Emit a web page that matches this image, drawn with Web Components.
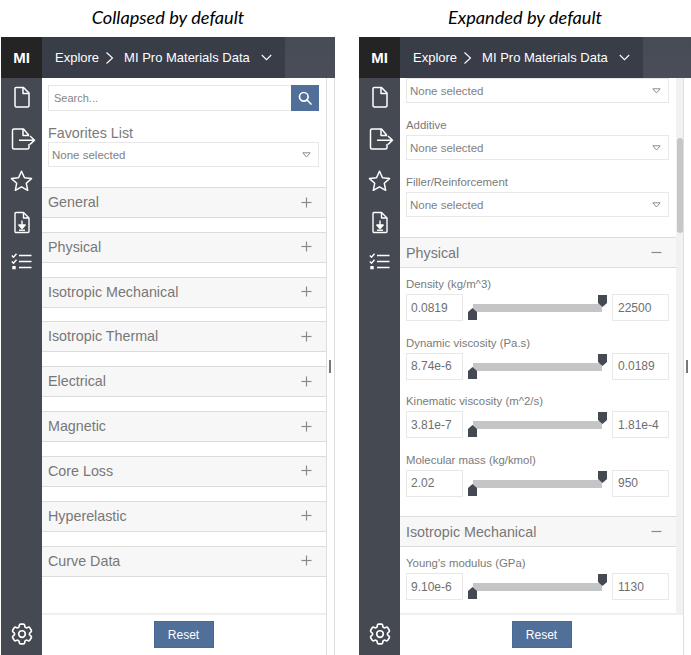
<!DOCTYPE html>
<html lang="en">
<head>
<meta charset="utf-8">
<title>MI Explore panels</title>
<style>
    html, body { margin: 0; background: #fff; }
    body { width: 691px; height: 655px; overflow: hidden; font-family: "Liberation Sans", Arial, sans-serif; }
    .page {
        display: grid;
        grid-template-columns: 334px 332px;
        grid-template-rows: 37px 618px;
        column-gap: 24px;
        padding-left: 1px;
    }
</style>
</head>
<body>
<div class="page">
    <mi-caption>Collapsed by default</mi-caption>
    <mi-caption>Expanded by default</mi-caption>

    <mi-panel>
        <mi-search></mi-search>
        <mi-select label="Favorites List" big></mi-select>
        <div style="height:20px"></div>
        <mi-section title="General"></mi-section>
        <mi-section title="Physical"></mi-section>
        <mi-section title="Isotropic Mechanical"></mi-section>
        <mi-section title="Isotropic Thermal"></mi-section>
        <mi-section title="Electrical"></mi-section>
        <mi-section title="Magnetic"></mi-section>
        <mi-section title="Core Loss"></mi-section>
        <mi-section title="Hyperelastic"></mi-section>
        <mi-section title="Curve Data"></mi-section>
    </mi-panel>

    <mi-panel scrollbar>
        <mi-select></mi-select>
        <mi-select label="Additive"></mi-select>
        <mi-select label="Filler/Reinforcement"></mi-select>
        <div style="height:20px"></div>
        <mi-section title="Physical" open>
            <mi-range label="Density (kg/m^3)" min="0.0819" max="22500"></mi-range>
            <mi-range label="Dynamic viscosity (Pa.s)" min="8.74e-6" max="0.0189"></mi-range>
            <mi-range label="Kinematic viscosity (m^2/s)" min="3.81e-7" max="1.81e-4"></mi-range>
            <mi-range label="Molecular mass (kg/kmol)" min="2.02" max="950"></mi-range>
        </mi-section>
        <mi-section title="Isotropic Mechanical" open>
            <mi-range label="Young's modulus (GPa)" min="9.10e-6" max="1130"></mi-range>
        </mi-section>
    </mi-panel>
</div>

<script>
class MiCaption extends HTMLElement {
    connectedCallback() {
        this.attachShadow({ mode: 'open' });
        this.shadowRoot.innerHTML = `
            <style>
                :host {
                    display: block;
                    text-align: center;
                    font: italic 18.200px/34px Lato, sans-serif;
                    color: #000;
                }
            </style>
            <slot></slot>
        `;
    }
}

class MiPanel extends HTMLElement {
    connectedCallback() {
        this.attachShadow({ mode: 'open' });
        const scrollbar = this.hasAttribute('scrollbar');
        this.shadowRoot.innerHTML = `
            <style>
                :host {
                    display: flex;
                    flex-direction: column;
                    font-family: "Liberation Sans", Arial, sans-serif;
                    overflow: hidden;
                }
                header {
                    display: flex;
                    flex: 0 0 41px;
                    background: linear-gradient(#474b55, #4a4e58);
                    color: #fff;
                }
                .brand {
                    flex: 0 0 41px;
                    display: flex;
                    align-items: center;
                    justify-content: center;
                    background: #242424;
                    font-weight: bold;
                    font-size: 15px;
                }
                .crumbs {
                    flex: 0 0 243px;
                    display: flex;
                    align-items: center;
                    box-sizing: border-box;
                    padding-left: 13px;
                    background: #383d47;
                    font-size: 13px;
                    white-space: nowrap;
                }
                .crumbs svg { display: block; }
                .sep { margin: 0 10px 0 6px; }
                .caret { margin-left: 11px; }
                .body { flex: 1; display: flex; min-height: 0; }
                nav {
                    flex: 0 0 41px;
                    display: flex;
                    flex-direction: column;
                    align-items: center;
                    gap: 19px;
                    background: #444952;
                    padding-top: 8px;
                }
                nav svg { display: block; }
                nav .gear { margin: auto 0 10px; }
                main {
                    flex: 0 0 ${scrollbar ? 284 : 285}px;
                    display: flex;
                    flex-direction: column;
                    box-sizing: border-box;
                    border-right: 1px solid #dedede;
                    min-height: 0;
                }
                .view { flex: 1; display: flex; min-height: 0; }
                .scroll { flex: 1; min-width: 0; overflow: hidden; }
                .track { flex: 0 0 7px; background: #f1f1f1; }
                .thumb { width: 6px; height: 95px; margin: 60px 0 0 1px; border-radius: 3px; background: #c6c6c6; }
                footer {
                    flex: 0 0 42px;
                    display: flex;
                    justify-content: center;
                    padding-top: 6px;
                    box-sizing: border-box;
                    border-top: 2px solid #f0f0f0;
                }
                button {
                    width: 60px;
                    height: 27px;
                    margin-left: ${scrollbar ? 0 : -1}px;
                    border: 1px solid #4a6a96;
                    background: #517099;
                    color: #fff;
                    font: 12px "Liberation Sans", Arial, sans-serif;
                    padding: 0;
                }
                .gutter {
                    flex: 1;
                    display: flex;
                    align-items: center;
                    justify-content: center;
                    box-sizing: border-box;
                    ${scrollbar ? '' : 'border-right: 1px solid #dedede;'}
                }
                .gutter i { display: block; width: 2px; height: 13px; background: #777; margin-left: ${scrollbar ? -1 : -1}px; }
            </style>
            <header>
                <div class="brand">MI</div>
                <div class="crumbs">
                    <span>Explore</span>
                    <svg class="sep" width="9" height="14" viewBox="0 0 9 14" fill="none" stroke="#fff" stroke-width="1.1"><path d="M1.5 1.5 7.5 7l-6 5.500"/></svg>
                    <span>MI Pro Materials Data</span>
                    <svg class="caret" width="11" height="7" viewBox="0 0 11 7" fill="none" stroke="#fff" stroke-width="1.1"><path d="M.8 1 5.500 5.700 10.200 1"/></svg>
                </div>
            </header>
            <div class="body">
                <nav>
                    <svg width="20" height="22" viewBox="0 0 20 22" fill="none" stroke="#fff" stroke-width="1.500" stroke-linejoin="round"><path d="M4 1.500h7.500L17 7V19.500a1.500 1.500 0 0 1-1.500 1.500h-11A1.500 1.500 0 0 1 3 19.500V2.500a1 1 0 0 1 1-1z"/><path d="M11 1.500v6h6"/></svg>
                    <svg width="26" height="24" viewBox="0 0 26 24" fill="none" stroke="#fff" stroke-width="1.500" stroke-linejoin="round" style="margin-left:3px"><path d="M19 8.500 13.500 2H4a1.500 1.500 0 0 0-1.500 1.500v17A1.500 1.500 0 0 0 4 22h13.500a1.500 1.500 0 0 0 1.500-1.500V17"/><path d="M13 2v6.500h6"/><path d="M9 13.200h15M20 9l4.500 4.200-4.500 4.200"/></svg>
                    <svg width="23" height="22" viewBox="0 0 23 22" fill="none" stroke="#fff" stroke-width="1.500" stroke-linejoin="round"><path d="M11.500 1.200 14.500 7.800l7 .8-5.200 4.700 1.400 7-6.200-3.500-6.200 3.500 1.400-7-5.200-4.700 7-.8z"/></svg>
                    <svg width="18" height="23" viewBox="0 0 18 23" fill="none" stroke="#fff" stroke-width="1.400" stroke-linejoin="round"><path d="M3 1.500h7.500L16 7v13.500a1 1 0 0 1-1 1H3a1 1 0 0 1-1-1v-18a1 1 0 0 1 1-1z"/><path d="M10.500 1.500V7H16"/><path d="M9 9.500v7"/><path d="M5.800 14h6.400L9 17.500z" fill="#fff"/><path d="M6 19.200h6"/></svg>
                    <svg width="21" height="17" viewBox="0 0 21 17" fill="none" stroke="#fff" stroke-width="1.400"><path d="M8 2.500h12.500M8 8.500h12.500M8 14.500h12.500"/><path d="M.8 2.500l1.700 1.700L5.500.8M.8 8.500l1.700 1.700 3-3.400"/><path d="M2 13.800h2v1.700H2z" fill="#fff"/></svg>
                    <svg class="gear" width="22" height="22" viewBox="2 2 20 20" fill="none" stroke="#fff" stroke-width="1.500" stroke-linejoin="round"><circle cx="12" cy="12" r="3"/><path d="M9.594 3.940c.09-.542.56-.94 1.110-.94h2.593c.55 0 1.020.398 1.110.94l.213 1.281c.063.374.313.686.645.870.074.040.147.083.220.127.325.196.720.257 1.075.124l1.217-.456a1.125 1.125 0 0 1 1.370.490l1.296 2.247a1.125 1.125 0 0 1-.260 1.431l-1.003.827c-.293.241-.438.613-.430.992a7.723 7.723 0 0 1 0 .255c-.008.378.137.750.430.991l1.004.827c.424.350.534.955.260 1.430l-1.298 2.247a1.125 1.125 0 0 1-1.369.491l-1.217-.456c-.355-.133-.750-.072-1.076.124a6.470 6.470 0 0 1-.220.128c-.331.183-.581.495-.644.869l-.213 1.281c-.09.543-.56.940-1.110.940h-2.594c-.55 0-1.019-.398-1.110-.940l-.213-1.281c-.062-.374-.312-.686-.644-.870a6.520 6.520 0 0 1-.220-.127c-.325-.196-.720-.257-1.076-.124l-1.217.456a1.125 1.125 0 0 1-1.369-.490l-1.297-2.247a1.125 1.125 0 0 1 .260-1.431l1.004-.827c.292-.240.437-.613.430-.991a6.932 6.932 0 0 1 0-.255c.007-.380-.138-.751-.430-.992l-1.004-.827a1.125 1.125 0 0 1-.260-1.430l1.297-2.247a1.125 1.125 0 0 1 1.370-.491l1.216.456c.356.133.751.072 1.076-.124.072-.044.146-.086.220-.128.332-.183.582-.495.644-.869l.214-1.280z"/></svg>
                </nav>
                <main>
                    <div class="view">
                        <div class="scroll"><slot></slot></div>
                        ${scrollbar ? '<div class="track"><div class="thumb"></div></div>' : ''}
                    </div>
                    <footer><button>Reset</button></footer>
                </main>
                <div class="gutter"><i></i></div>
            </div>
        `;
    }
}

class MiSearch extends HTMLElement {
    connectedCallback() {
        this.attachShadow({ mode: 'open' });
        this.shadowRoot.innerHTML = `
            <style>
                :host {
                    display: flex;
                    margin: 7px 7px 0 6px;
                    height: 26px;
                    font-family: "Liberation Sans", Arial, sans-serif;
                }
                .input {
                    flex: 1;
                    display: flex;
                    align-items: center;
                    box-sizing: border-box;
                    border: 1px solid #e6e6e6;
                    border-right: 0;
                    padding-left: 5px;
                    font-size: 11px;
                    color: #858585;
                }
                .btn {
                    flex: 0 0 28px;
                    display: flex;
                    align-items: center;
                    justify-content: center;
                    background: #517099;
                }
            </style>
            <div class="input">Search...</div>
            <div class="btn">
                <svg width="14" height="14" viewBox="0 0 14 14" fill="none" stroke="#fff" stroke-width="1.700"><circle cx="5.800" cy="5.800" r="4.300"/><path d="m9 9 4 4" stroke-linecap="round"/></svg>
            </div>
        `;
    }
}

class MiSelect extends HTMLElement {
    connectedCallback() {
        this.attachShadow({ mode: 'open' });
        const label = this.getAttribute('label');
        const big = this.hasAttribute('big');
        this.shadowRoot.innerHTML = `
            <style>
                :host {
                    display: block;
                    margin: 0 7px 0 6px;
                    font-family: "Liberation Sans", Arial, sans-serif;
                }
                .label {
                    color: #7a7a7a;
                    font-size: ${big ? 14.300 : 11.400}px;
                    line-height: ${big ? 16 : 14}px;
                    padding-top: ${big ? 14 : 15}px;
                    padding-bottom: ${big ? 1 : 3}px;
                }
                .box {
                    display: flex;
                    align-items: center;
                    justify-content: space-between;
                    height: 25px;
                    box-sizing: border-box;
                    border: 1px solid #e8e8e8;
                    padding: 0 7px 0 3px;
                    font-size: 11.500px;
                    color: #7f7f7f;
                }
                svg { display: block; margin-top: 1px; }
            </style>
            ${label ? `<div class="label">${label}</div>` : ''}
            <div class="box">
                <span>None selected</span>
                <svg width="9" height="6" viewBox="0 0 9 6" fill="none" stroke="#8c8c8c"><path d="M.8.800h7.400L4.500 5z"/></svg>
            </div>
        `;
    }
}

class MiSection extends HTMLElement {
    connectedCallback() {
        this.attachShadow({ mode: 'open' });
        const open = this.hasAttribute('open');
        const title = this.getAttribute('title');
        this.shadowRoot.innerHTML = `
            <style>
                :host {
                    display: block;
                    font-family: "Liberation Sans", Arial, sans-serif;
                    margin-bottom: ${open ? 0 : 13.830}px;
                }
                .head {
                    display: flex;
                    align-items: center;
                    justify-content: space-between;
                    height: 31px;
                    box-sizing: border-box;
                    border-top: 1px solid #dcdcdc;
                    border-bottom: 1px solid #dcdcdc;
                    background: #f7f7f7;
                    padding: 0 14px ${open ? 0 : 1}px 6px;
                    font-size: 14.300px;
                    color: #777;
                }
                svg { display: block; }
                .items { padding-bottom: ${open ? 14 : 0}px; }
            </style>
            <div class="head">
                <span>${title}</span>
                <svg width="11" height="11" viewBox="0 0 11 11" stroke="#8a8a8a" stroke-width="1.200"><path d="M.5 5.500h10"/>${open ? '' : '<path d="M5.500.5v10"/>'}</svg>
            </div>
            ${open ? '<div class="items"><slot></slot></div>' : ''}
        `;
    }
}

class MiRange extends HTMLElement {
    connectedCallback() {
        this.attachShadow({ mode: 'open' });
        const label = this.getAttribute('label');
        const min = this.getAttribute('min');
        const max = this.getAttribute('max');
        this.shadowRoot.innerHTML = `
            <style>
                :host {
                    display: block;
                    height: 58.600px;
                    margin: 0 7px 0 6px;
                    font-family: "Liberation Sans", Arial, sans-serif;
                }
                .label {
                    color: #7a7a7a;
                    font-size: 11.400px;
                    line-height: 14px;
                    padding-top: 9px;
                    padding-bottom: 3px;
                }
                .row { display: flex; height: 27px; }
                .val {
                    flex: 0 0 57px;
                    display: flex;
                    align-items: center;
                    box-sizing: border-box;
                    border: 1px solid #e8e8e8;
                    padding-left: 4px;
                    font-size: 12px;
                    color: #6f6f6f;
                }
                .val.max { padding-left: 5px; }
                .slider { flex: 1; position: relative; }
                .bar { position: absolute; left: 10px; right: 10px; top: 10px; height: 8px; background: #c4c5c7; }
                svg { position: absolute; display: block; }
                .lo { left: 5px; top: 14px; }
                .hi { right: 5px; top: 1px; }
            </style>
            <div class="label">${label}</div>
            <div class="row">
                <div class="val">${min}</div>
                <div class="slider">
                    <div class="bar"></div>
                    <svg class="lo" width="9" height="12" viewBox="0 0 9 12" fill="#444952"><path d="M4.500 0 9 4v8H0V4z"/></svg>
                    <svg class="hi" width="9" height="12" viewBox="0 0 9 12" fill="#444952"><path d="M0 0h9v8l-4.500 4L0 8z"/></svg>
                </div>
                <div class="val max">${max}</div>
            </div>
        `;
    }
}

customElements.define('mi-caption', MiCaption);
customElements.define('mi-panel', MiPanel);
customElements.define('mi-search', MiSearch);
customElements.define('mi-select', MiSelect);
customElements.define('mi-section', MiSection);
customElements.define('mi-range', MiRange);
</script>
</body>
</html>
